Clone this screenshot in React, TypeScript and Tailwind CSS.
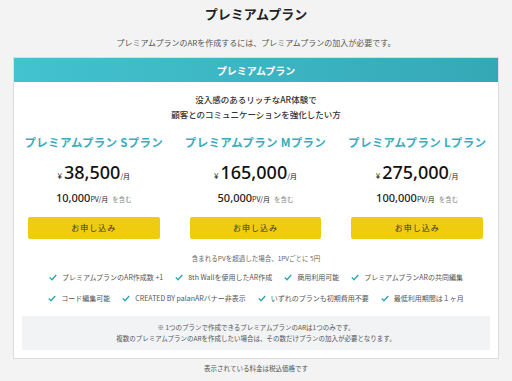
const plans = [
  { name: 'プレミアムプラン Sプラン', price: '38,500', pv: '10,000' },
  { name: 'プレミアムプラン Mプラン', price: '165,000', pv: '50,000' },
  { name: 'プレミアムプラン Lプラン', price: '275,000', pv: '100,000' },
]

const featureRows = [
  ['プレミアムプランのAR作成数 +1', '8th Wallを使用したAR作成', '商用利用可能', 'プレミアムプランARの共同編集'],
  ['コード編集可能', 'CREATED BY palanARバナー非表示', 'いずれのプランも初期費用不要', '最低利用期間は１ヶ月'],
]

function Check() {
  return (
    <svg width="8" height="7" viewBox="0 0 8 7" className="shrink-0">
      <path d="M0.8 3.6 L3 5.7 L7.2 1" fill="none" stroke="#2aa6b8" strokeWidth="1.4" />
    </svg>
  )
}

export default function App() {
  return (
    <div
      className="w-[512px] h-[381px] bg-[#f3f3f3] text-[#222] overflow-hidden"
      style={{ fontFamily: '"Noto Sans CJK JP", "Noto Sans", sans-serif' }}
    >
      <h1 className="pt-[5px] h-[37px] text-center text-[13px] font-bold leading-[18px]">プレミアムプラン</h1>
      <p className="h-[20px] text-center text-[8px] leading-[12px] text-[#555]">
        プレミアムプランのARを作成するには、プレミアムプランの加入が必要です。
      </p>

      <div className="mx-[13px] border border-[#dddddd] bg-white">
        <div className="h-[24px] bg-gradient-to-r from-[#43c2cf] to-[#35a8b6] flex items-center justify-center text-white text-[10px] font-bold">
          プレミアムプラン
        </div>

        <div className="pt-[10px] text-center text-[8.5px] font-medium leading-[15px] text-[#333]">
          <p>没入感のあるリッチなAR体験で</p>
          <p>顧客とのコミュニケーションを強化したい方</p>
        </div>

        <div className="grid grid-cols-3 gap-x-[30px] pl-[14px] pr-[15px] pt-[14px]">
          {plans.map((p) => (
            <div key={p.name} className="flex flex-col items-center">
              <div className="h-[14px] flex items-center text-[11.5px] font-bold text-[#3aadbd] tracking-[0.3px] whitespace-nowrap">
                {p.name}
              </div>
              <div className="mt-[12px] h-[20px] flex items-baseline text-[#111]">
                <span className="text-[8px] mr-[2px]">¥</span>
                <span className="text-[18px] font-medium leading-[20px]" style={{ fontFamily: '"Noto Sans", sans-serif' }}>{p.price}</span>
                <span className="text-[7px]">/月</span>
              </div>
              <div className="mt-[8px] h-[14px] flex items-baseline">
                <span className="text-[11px] font-medium" style={{ fontFamily: '"Noto Sans", sans-serif' }}>{p.pv}</span>
                <span className="text-[7px]">PV/月</span>
                <span className="ml-[4px] text-[6.5px] text-[#888]">を含む</span>
              </div>
              <button className="mt-[13px] w-full h-[22px] rounded-[2px] bg-[#f0cc10] text-[8px] tracking-[1px] text-[#333]">
                お申し込み
              </button>
            </div>
          ))}
        </div>

        <p className="mt-[14px] text-center text-[6.5px] text-[#666] leading-[10px]">
          含まれるPVを超過した場合、1PVごとに 5円
        </p>

        <div className="mt-[9px] flex flex-col gap-[10px]">
          {featureRows.map((row, i) => (
            <div key={i} className="flex justify-center gap-x-[12px] h-[11px] items-center">
              {row.map((f) => (
                <div key={f} className="flex items-center gap-[5px] text-[7px] text-[#555] whitespace-nowrap">
                  <Check />
                  <span>{f}</span>
                </div>
              ))}
            </div>
          ))}
        </div>

        <div className="mx-[8px] mt-[12px] mb-[8px] bg-[#f2f3f5] py-[6px] text-center text-[6.5px] leading-[11px] text-[#555]">
          <p>{'\u203B\uFE0E'} 1つのプランで作成できるプレミアムプランのARは1つのみです。</p>
          <p>複数のプレミアムプランのARを作成したい場合は、その数だけプランの加入が必要となります。</p>
        </div>
      </div>

      <p className="mt-[5px] text-center text-[6.5px] text-[#555]">表示されている料金は税込価格です</p>
    </div>
  )
}
